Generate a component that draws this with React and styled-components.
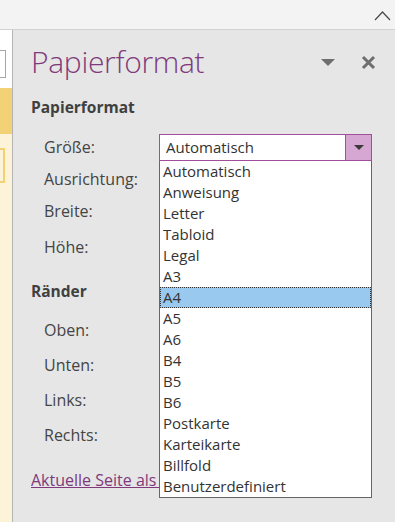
import React from "react";
import styled, { createGlobalStyle } from "styled-components";

const sizes = [
    "Automatisch",
    "Anweisung",
    "Letter",
    "Tabloid",
    "Legal",
    "A3",
    "A4",
    "A5",
    "A6",
    "B4",
    "B5",
    "B6",
    "Postkarte",
    "Karteikarte",
    "Billfold",
    "Benutzerdefiniert",
];

export default function App() {
    return (
        <>
            <GlobalStyle />
            <Window>
                <TopBar>
                    <svg width="17" height="11" viewBox="0 0 17 11">
                        <path d="M1 10 L8.5 2 L16 10" fill="none" stroke="#4a4a4a" strokeWidth="1.2" />
                    </svg>
                </TopBar>
                <Main>
                    <PageStrip>
                        <TitleBox />
                        <ActiveBand />
                        <NoteBox />
                    </PageStrip>
                    <Panel>
                        <Header>
                            <Title>Papierformat</Title>
                            <HeaderIcon $w={40}>
                                <svg width="14" height="7" viewBox="0 0 14 7">
                                    <path d="M0 0 H14 L7 7 Z" fill="#6e6e6e" />
                                </svg>
                            </HeaderIcon>
                            <HeaderIcon $w={34}>
                                <svg width="15" height="15" viewBox="0 0 15 15">
                                    <path d="M2 2 L13 13 M13 2 L2 13" stroke="#6e6e6e" strokeWidth="3" />
                                </svg>
                            </HeaderIcon>
                        </Header>

                        <SectionTitle>Papierformat</SectionTitle>
                        <FieldRow $h={32} $mt={13}>
                            <Label>Größe:</Label>
                            <ComboWrap>
                                <Combo>
                                    <ComboText>Automatisch</ComboText>
                                    <ComboButton>
                                        <svg width="10" height="5" viewBox="0 0 10 5">
                                            <path d="M0 0 H10 L5 5 Z" fill="#3a3a3a" />
                                        </svg>
                                    </ComboButton>
                                </Combo>
                                <List>
                                    {sizes.map((s) => (
                                        <Item key={s} $active={s === "A4"}>
                                            {s}
                                        </Item>
                                    ))}
                                </List>
                            </ComboWrap>
                        </FieldRow>
                        <FieldRow $h={31}>
                            <Label>Ausrichtung:</Label>
                        </FieldRow>
                        <FieldRow $h={34}>
                            <Label>Breite:</Label>
                        </FieldRow>
                        <FieldRow $h={38}>
                            <Label>Höhe:</Label>
                        </FieldRow>

                        <SectionTitle $mt={14}>Ränder</SectionTitle>
                        <FieldRow $h={35} $mt={10}>
                            <Label>Oben:</Label>
                        </FieldRow>
                        <FieldRow $h={35}>
                            <Label>Unten:</Label>
                        </FieldRow>
                        <FieldRow $h={35}>
                            <Label>Links:</Label>
                        </FieldRow>
                        <FieldRow $h={35}>
                            <Label>Rechts:</Label>
                        </FieldRow>

                        <LinkClip>
                            <TemplateLink href="#">Aktuelle Seite als Vorlage speichern</TemplateLink>
                        </LinkClip>
                    </Panel>
                </Main>
            </Window>
        </>
    );
}

const GlobalStyle = createGlobalStyle`
    html, body {
        margin: 0;
        padding: 0;
        background: #e6e6e6;
    }
    body {
        font-family: "Open Sans", "Noto Sans", sans-serif;
    }
`;

const Window = styled.div`
    width: 395px;
    height: 522px;
    display: flex;
    flex-direction: column;
    overflow: hidden;
`;

const TopBar = styled.div`
    flex-shrink: 0;
    background: #f3f3f3;
    border-bottom: 1px solid #d2d2d2;
    display: flex;
    justify-content: flex-end;
    align-items: center;
    padding-right: 4px;
    box-sizing: border-box;
    height: 30px;

    svg {
        margin-top: 1px;
    }
`;

const Main = styled.div`
    flex: 1;
    display: flex;
    min-height: 0;
`;

const PageStrip = styled.div`
    width: 12px;
    flex-shrink: 0;
    border-right: 1px solid #b4b4b4;
    background: #fdf3d8;
    display: flex;
    flex-direction: column;
    overflow: hidden;
`;

const TitleBox = styled.div`
    height: 58px;
    background: #ffffff;
    position: relative;
    flex-shrink: 0;

    &::after {
        content: "";
        display: block;
        position: absolute;
        left: -10px;
        top: 20px;
        width: 14px;
        height: 26px;
        border: 1px solid #a6a6a6;
    }
`;

const ActiveBand = styled.div`
    height: 46px;
    background: #f2d274;
    flex-shrink: 0;
`;

const NoteBox = styled.div`
    margin-top: 14px;
    margin-left: -10px;
    width: 11px;
    height: 31px;
    border: 2px solid #f2d274;
    flex-shrink: 0;
`;

const Panel = styled.div`
    flex: 1;
    background: #e6e6e6;
    padding: 10px 0 0 18px;
    display: flex;
    flex-direction: column;
    color: #444444;
`;

const Header = styled.div`
    display: flex;
    align-items: center;
    height: 44px;
`;

const Title = styled.div`
    flex: 1;
    font-size: 30px;
    font-weight: 300;
    line-height: 44px;
    color: #80397b;
    letter-spacing: -0.3px;
`;

const HeaderIcon = styled.div`
    width: ${(p) => p.$w}px;
    display: flex;
    justify-content: flex-start;
    align-items: center;
    height: 44px;
`;

const SectionTitle = styled.div`
    margin-top: ${(p) => p.$mt ?? 12}px;
    font-size: 15.5px;
    font-weight: 700;
    line-height: 22px;
    color: #404040;
`;

const FieldRow = styled.div`
    height: ${(p) => p.$h}px;
    margin-top: ${(p) => p.$mt ?? 0}px;
    margin-left: 13px;
    display: flex;
    align-items: center;
    flex-shrink: 0;
`;

const Label = styled.div`
    width: 115px;
    font-size: 16px;
    line-height: 20px;
    color: #444444;
`;

const ComboWrap = styled.div`
    position: relative;
    width: 213px;
    height: 27px;
`;

const Combo = styled.div`
    box-sizing: border-box;
    height: 27px;
    border: 1px solid #a14f9c;
    background: #ffffff;
    display: flex;
`;

const ComboText = styled.div`
    flex: 1;
    padding-left: 6px;
    font-size: 15px;
    line-height: 25px;
    color: #333333;
`;

const ComboButton = styled.div`
    width: 25px;
    background: #d5a7d2;
    border-left: 1px solid #a14f9c;
    display: flex;
    align-items: center;
    justify-content: center;
`;

const List = styled.div`
    position: absolute;
    top: 27px;
    left: 0;
    width: 213px;
    box-sizing: border-box;
    background: #ffffff;
    border: 1px solid #666666;
    border-top: none;
    z-index: 10;
`;

const Item = styled.div`
    box-sizing: border-box;
    height: 21px;
    padding-left: 2px;
    font-size: 15px;
    line-height: 18px;
    color: #333333;
    white-space: nowrap;
    background: ${(p) => (p.$active ? "#99c9ef" : "transparent")};
    border: 1px dotted ${(p) => (p.$active ? "#333333" : "transparent")};
`;

const LinkClip = styled.div`
    margin-top: 17px;
    width: 128px;
    overflow: hidden;
    white-space: nowrap;
`;

const TemplateLink = styled.a`
    font-size: 16px;
    line-height: 20px;
    color: #80397b;
    text-decoration: underline;
`;
